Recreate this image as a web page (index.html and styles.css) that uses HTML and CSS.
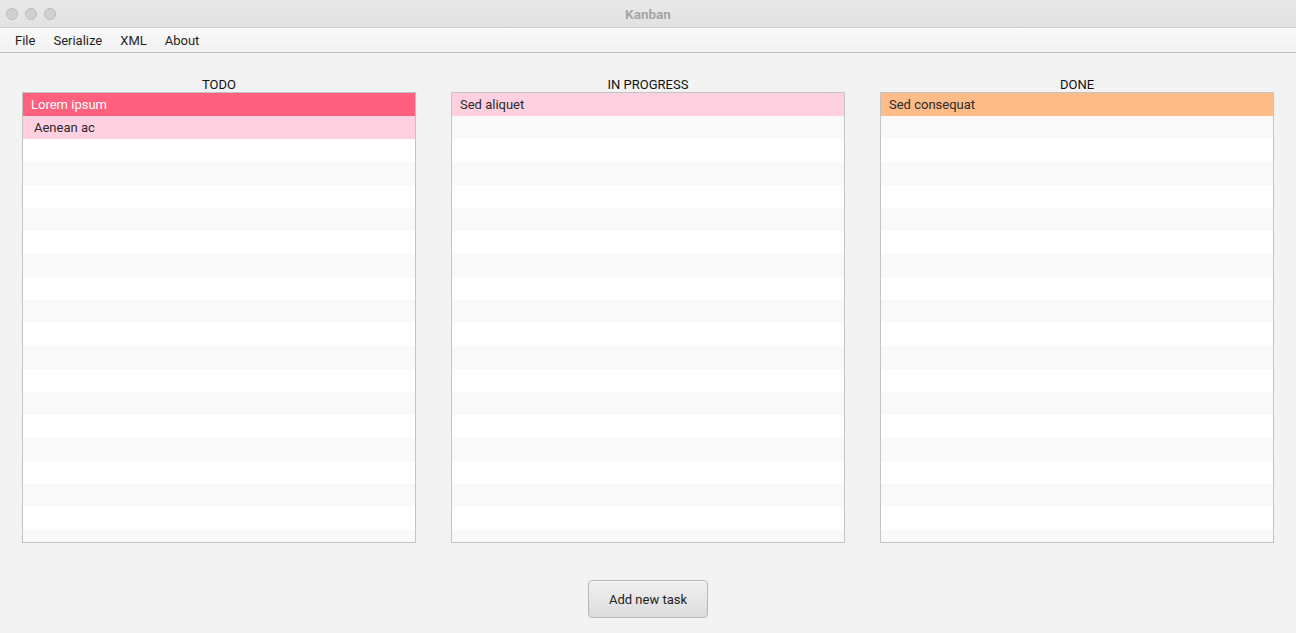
FILE: index.html
```html
<!DOCTYPE html>
<html lang="en">
<head>
<meta charset="utf-8">
<title>Kanban</title>
<link rel="stylesheet" href="styles.css">
</head>
<body>
<div class="window">
  <div class="titlebar">
    <div class="lights">
      <span class="light"></span>
      <span class="light"></span>
      <span class="light"></span>
    </div>
    <div class="title">Kanban</div>
  </div>
  <div class="menubar">
    <span class="menu-item">File</span>
    <span class="menu-item">Serialize</span>
    <span class="menu-item">XML</span>
    <span class="menu-item">About</span>
  </div>
  <main class="content">
    <div class="board">
      <section class="column">
        <div class="col-title">TODO</div>
        <div class="list">
          <div class="row selected">Lorem ipsum</div>
          <div class="row pink indent">Aenean ac</div>
          <div class="row"></div><div class="row"></div><div class="row"></div><div class="row"></div>
          <div class="row"></div><div class="row"></div><div class="row"></div><div class="row"></div>
          <div class="row"></div><div class="row"></div><div class="row"></div><div class="row"></div>
          <div class="row"></div><div class="row"></div><div class="row"></div><div class="row"></div>
          <div class="row"></div><div class="row"></div>
        </div>
      </section>
      <section class="column">
        <div class="col-title">IN PROGRESS</div>
        <div class="list">
          <div class="row pink">Sed aliquet</div>
          <div class="row"></div><div class="row"></div><div class="row"></div><div class="row"></div>
          <div class="row"></div><div class="row"></div><div class="row"></div><div class="row"></div>
          <div class="row"></div><div class="row"></div><div class="row"></div><div class="row"></div>
          <div class="row"></div><div class="row"></div><div class="row"></div><div class="row"></div>
          <div class="row"></div><div class="row"></div><div class="row"></div>
        </div>
      </section>
      <section class="column">
        <div class="col-title">DONE</div>
        <div class="list">
          <div class="row orange">Sed consequat</div>
          <div class="row"></div><div class="row"></div><div class="row"></div><div class="row"></div>
          <div class="row"></div><div class="row"></div><div class="row"></div><div class="row"></div>
          <div class="row"></div><div class="row"></div><div class="row"></div><div class="row"></div>
          <div class="row"></div><div class="row"></div><div class="row"></div><div class="row"></div>
          <div class="row"></div><div class="row"></div><div class="row"></div>
        </div>
      </section>
    </div>
    <div class="actions">
      <button class="btn">Add new task</button>
    </div>
  </main>
</div>
</body>
</html>
```

FILE: styles.css
```css
html, body {
  margin: 0;
  padding: 0;
  height: 633px;
  overflow: hidden;
}
body {
  font-family: Roboto, "Liberation Sans", sans-serif;
  font-size: 13px;
  color: #222;
  background: #f3f3f3;
}
.window {
  display: flex;
  flex-direction: column;
  height: 633px;
}
.titlebar {
  height: 28px;
  box-sizing: border-box;
  background: linear-gradient(#e9e9e9, #e2e2e2);
  border-bottom: 1px solid #cfcfcf;
  display: flex;
  align-items: center;
  position: relative;
}
.lights {
  display: flex;
  gap: 7px;
  padding-left: 6px;
}
.light {
  width: 12px;
  height: 12px;
  border-radius: 50%;
  background: #d0d0d0;
  box-sizing: border-box;
  border: 1px solid #bdbdbd;
}
.title {
  position: absolute;
  left: 0;
  right: 0;
  text-align: center;
  font-weight: 700;
  font-size: 13.5px;
  color: #a6a6a6;
  pointer-events: none;
}
.menubar {
  height: 25px;
  box-sizing: border-box;
  background: linear-gradient(#fafafa, #f1f1f1);
  border-bottom: 1px solid #bfbfbf;
  display: flex;
  align-items: center;
  padding-left: 15px;
  gap: 18px;
  font-size: 13px;
  color: #1f1f1f;
}
.content {
  flex: 1;
  display: flex;
  flex-direction: column;
  padding: 22px 22px 0;
}
.board {
  display: grid;
  grid-template-columns: repeat(3, 1fr);
  gap: 35px;
}
.column {
  display: flex;
  flex-direction: column;
}
.col-title {
  text-align: center;
  font-size: 13px;
  color: #111;
  height: 17px;
  line-height: 20px;
}
.list {
  height: 451px;
  box-sizing: border-box;
  border: 1px solid #c3c3c3;
  background: #f9f9f9;
  overflow: hidden;
}
.row {
  height: 23px;
  line-height: 23px;
  padding-left: 8px;
  background: #ffffff;
  color: #2a2a2a;
  font-size: 13px;
}
.row:nth-child(even) {
  background: #f9f9f9;
}
.row.selected {
  background: #ff607e;
  color: #ffffff;
}
.row.pink {
  background: #ffd0e0;
}
.row.orange {
  background: #ffbb88;
}
.row.indent {
  padding-left: 11px;
}
.actions {
  display: flex;
  justify-content: center;
  padding-top: 37px;
}
.btn {
  width: 120px;
  height: 38px;
  font-family: inherit;
  font-size: 13px;
  color: #222;
  border: 1px solid #b8b8b8;
  border-radius: 4px;
  background: linear-gradient(#f1f1f1, #dcdcdc);
  box-shadow: 0 1px 0 rgba(255,255,255,0.6) inset;
}
```
